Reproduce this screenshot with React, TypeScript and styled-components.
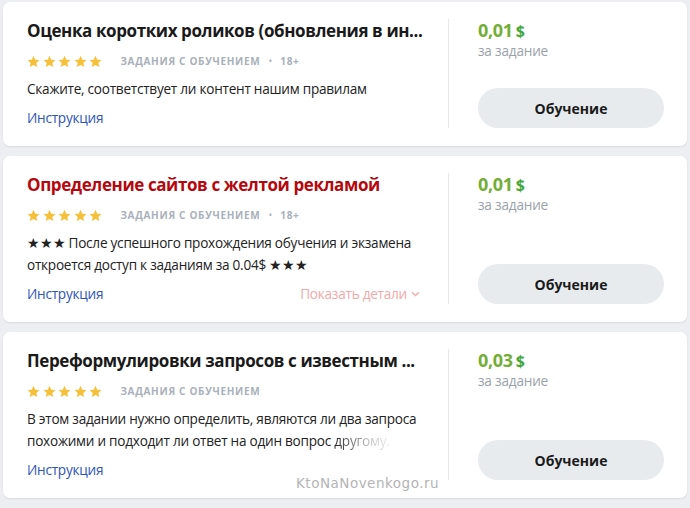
import React from 'react';
import styled, { createGlobalStyle } from 'styled-components';

const GlobalStyle = createGlobalStyle`
  html, body {
    margin: 0;
    padding: 0;
    background: #eceef1;
    overflow: hidden;
  }
  body {
    font-family: "Open Sans", "Noto Sans", Arial, sans-serif;
    color: #1f1f1f;
  }
`;

const Page = styled.div`
  position: relative;
  display: flex;
  flex-direction: column;
  gap: 10px;
  padding: 2px 3px 0 3px;
`;

const Card = styled.div`
  display: grid;
  grid-template-columns: 1fr 216px;
  background: #fff;
  border-radius: 7px;
  box-shadow: 0 1px 2px rgba(0, 0, 0, 0.08);
  padding: 17px 23px 18px 24px;
`;

const Info = styled.div`
  display: flex;
  flex-direction: column;
  gap: 8px;
  padding-right: 18px;
  min-width: 0;
`;

const Title = styled.div<{ $accent?: boolean }>`
  font-size: 17px;
  line-height: 24px;
  font-weight: 700;
  letter-spacing: -0.4px;
  color: ${p => (p.$accent ? '#b5080e' : '#1a1a1a')};
  white-space: nowrap;
  overflow: hidden;
  text-overflow: ellipsis;
`;

const Meta = styled.div`
  display: flex;
  align-items: center;
  height: 18px;
  margin-top: 1px;
`;

const Stars = styled.div`
  display: flex;
  gap: 2.6px;
  margin-right: 18px;
`;

const Tag = styled.span`
  font-size: 10px;
  font-weight: 700;
  letter-spacing: 0.7px;
  text-transform: uppercase;
  color: #a9b0ba;
`;

const Dot = styled.span`
  font-size: 10px;
  color: #a9b0ba;
  margin: 0 8px;
`;

const Description = styled.div`
  font-size: 13.6px;
  line-height: 22px;
  letter-spacing: -0.25px;
  color: #222;
`;

const Fade = styled.span`
  background: linear-gradient(90deg, #222 0%, #bbb 60%, #eee 100%);
  -webkit-background-clip: text;
  background-clip: text;
  color: transparent;
`;

const LinkRow = styled.div`
  display: flex;
  justify-content: space-between;
  align-items: center;
  line-height: 20px;
  font-size: 13.6px;
  letter-spacing: -0.25px;
`;

const Link = styled.a`
  color: #2b55b8;
  text-decoration: none;
`;

const Details = styled.span`
  display: flex;
  align-items: center;
  gap: 4px;
  color: #f3a9a9;
  margin-right: 10px;
`;

const Side = styled.div`
  display: flex;
  flex-direction: column;
  justify-content: space-between;
  border-left: 1px solid #e6e8eb;
  padding-left: 29px;
`;

const Price = styled.div`
  display: flex;
  flex-direction: column;
`;

const Amount = styled.div`
  font-size: 18px;
  line-height: 22px;
  font-weight: 700;
  letter-spacing: -0.3px;
  color: #72ae36;
`;

const Currency = styled.span`
  font-size: 16px;
  color: #45a83c;
  margin-left: 3px;
`;

const PerTask = styled.div`
  font-size: 13.6px;
  line-height: 17px;
  letter-spacing: -0.2px;
  color: #9aa1a9;
`;

const Button = styled.button`
  width: 186px;
  height: 40px;
  border: none;
  border-radius: 20px;
  background: #e8ebee;
  font-family: inherit;
  font-size: 14px;
  font-weight: 700;
  color: #1a1a1a;
  cursor: pointer;
`;

const Watermark = styled.div`
  position: absolute;
  left: 296px;
  top: 475px;
  font-family: "DejaVu Sans", Verdana, sans-serif;
  font-size: 13.5px;
  letter-spacing: 0.5px;
  color: #b4b4b4;
  text-shadow: 0 0 2px #fff;
`;

const Star = () => (
  <svg width="13" height="13" viewBox="0 0 24 24">
    <path
      d="M12 1.5l3.2 7.1 7.8.8-5.8 5.2 1.7 7.7L12 18.4l-6.9 3.9 1.7-7.7L1 9.4l7.8-.8z"
      fill="#f6c03a"
    />
  </svg>
);

const Chevron = () => (
  <svg width="9" height="6" viewBox="0 0 9 6">
    <path d="M1 1.2l3.5 3.3L8 1.2" fill="none" stroke="#f3a9a9" strokeWidth="1.3" />
  </svg>
);

type Task = {
  title: string;
  accent?: boolean;
  adult?: boolean;
  description: React.ReactNode;
  details?: boolean;
  price: string;
};

const tasks: Task[] = [
  {
    title: 'Оценка коротких роликов (обновления в ин...',
    adult: true,
    description: 'Скажите, соответствует ли контент нашим правилам',
    price: '0,01',
  },
  {
    title: 'Определение сайтов с желтой рекламой',
    accent: true,
    adult: true,
    description: '★★★ После успешного прохождения обучения и экзамена откроется доступ к заданиям за 0.04$ ★★★',
    details: true,
    price: '0,01',
  },
  {
    title: 'Переформулировки запросов с известным ...',
    description: (
      <>
        В этом задании нужно определить, являются ли два запроса похожими и подходит ли ответ на один вопрос{' '}
        <Fade>другому.</Fade>
      </>
    ),
    price: '0,03',
  },
  {
    title: 'Разметка изображений для поиска',
    description: 'Выберите подходящие изображения',
    price: '0,02',
  },
];

const TaskCard: React.FC<{ task: Task }> = ({ task }) => (
  <Card>
    <Info>
      <Title $accent={task.accent}>{task.title}</Title>
      <Meta>
        <Stars>
          {[0, 1, 2, 3, 4].map(i => (
            <Star key={i} />
          ))}
        </Stars>
        <Tag>Задания с обучением</Tag>
        {task.adult && (
          <>
            <Dot>•</Dot>
            <Tag>18+</Tag>
          </>
        )}
      </Meta>
      <Description>{task.description}</Description>
      <LinkRow>
        <Link href="#">Инструкция</Link>
        {task.details && (
          <Details>
            Показать детали <Chevron />
          </Details>
        )}
      </LinkRow>
    </Info>
    <Side>
      <Price>
        <Amount>
          {task.price}
          <Currency>$</Currency>
        </Amount>
        <PerTask>за задание</PerTask>
      </Price>
      <Button>Обучение</Button>
    </Side>
  </Card>
);

export default function App() {
  return (
    <Page>
      <GlobalStyle />
      {tasks.map(t => (
        <TaskCard key={t.title} task={t} />
      ))}
      <Watermark>KtoNaNovenkogo.ru</Watermark>
    </Page>
  );
}
